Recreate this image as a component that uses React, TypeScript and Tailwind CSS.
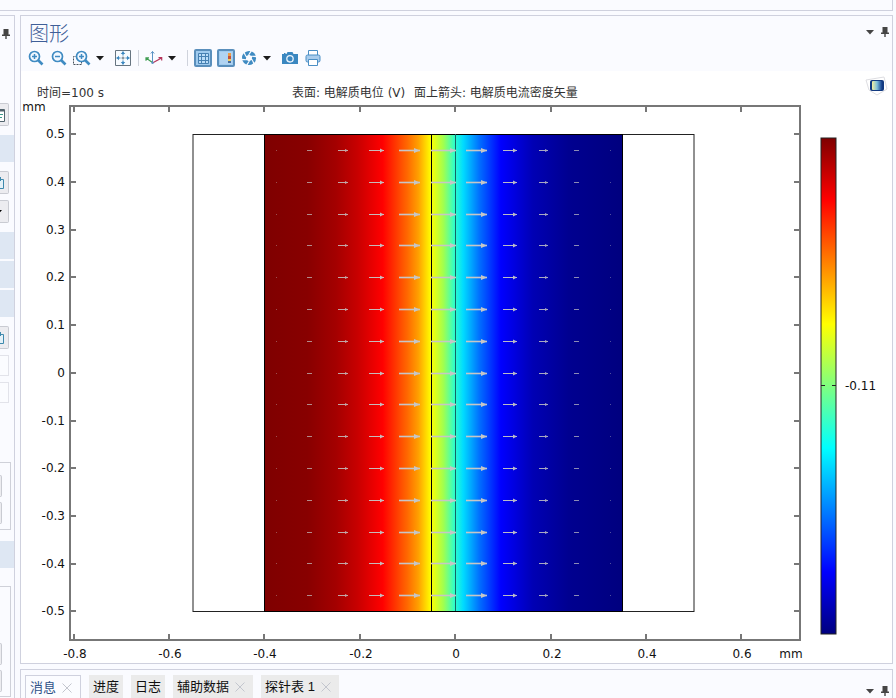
import type { ReactNode } from "react";

const xTicks = [-0.8, -0.6, -0.4, -0.2, 0, 0.2, 0.4, 0.6];
const yTicks = [0.5, 0.4, 0.3, 0.2, 0.1, 0, -0.1, -0.2, -0.3, -0.4, -0.5];

const toX = (v: number) => Math.round(455.2 + v * 477);
const toY = (v: number) => Math.round(372.8 - v * 477);

const surfaceStops = [
  [0, "#7f0000"],
  [0.12, "#880000"],
  [0.2, "#a40000"],
  [0.26, "#c80000"],
  [0.33, "#ff0000"],
  [0.4, "#ff6a00"],
  [0.43, "#ffa000"],
  [0.465, "#ffff00"],
  [0.5, "#a0ff50"],
  [0.53, "#30ffc8"],
  [0.555, "#00dcff"],
  [0.6, "#0070ff"],
  [0.66, "#0000ff"],
  [0.75, "#0000b4"],
  [0.85, "#000090"],
  [1, "#00007f"],
] as const;

const legendStops = [
  [0, "#7f0000"],
  [0.125, "#ff0000"],
  [0.375, "#ffff00"],
  [0.625, "#00ffff"],
  [0.875, "#0000ff"],
  [1, "#00007f"],
] as const;

// start x, length, stroke width and opacity of one arrow row
const arrows = [
  { x: 276, len: 1, w: 1, o: 0.4 },
  { x: 307, len: 5, w: 1, o: 0.7 },
  { x: 338, len: 10, w: 1, o: 0.85 },
  { x: 369, len: 15, w: 1, o: 0.95 },
  { x: 399, len: 21, w: 2, o: 1 },
  { x: 431, len: 25, w: 2, o: 1 },
  { x: 466, len: 21, w: 2, o: 1 },
  { x: 503, len: 14, w: 1, o: 0.95 },
  { x: 539, len: 9, w: 1, o: 0.85 },
  { x: 574, len: 5, w: 1, o: 0.7 },
  { x: 610, len: 1, w: 1, o: 0.4 },
];

function Caret() {
  return (
    <svg className="w-2 h-2" viewBox="0 0 8 8" fill="currentColor" aria-hidden="true">
      <path d="M0 2h8L4 6.500z" />
    </svg>
  );
}

function Pin() {
  return (
    <svg className="w-2 h-3" viewBox="0 0 8 12" fill="currentColor" aria-hidden="true">
      <path d="M1.500 1h5v5.500H8v1.500H4.700v3H3.300V8H0V6.500h1.500z" />
    </svg>
  );
}

function ToolButton({ label, active, children }: { label: string; active?: boolean; children: ReactNode }) {
  return (
    <button
      type="button"
      aria-label={label}
      className={
        active
          ? "w-[18px] h-[18px] flex items-center justify-center rounded-xs border-2 border-[#5a8fbc] bg-[#9fcbef]"
          : "w-[18px] h-[18px] flex items-center justify-center"
      }
    >
      {children}
    </button>
  );
}

function CaretButton({ label }: { label: string }) {
  return (
    <button type="button" aria-label={label} className="w-2 h-4 flex items-center justify-center text-[#1c1c1c]">
      <Caret />
    </button>
  );
}

function Magnifier({ sign, box }: { sign: "plus" | "minus"; box?: boolean }) {
  return (
    <svg className={box ? "w-[18px] h-4" : "w-4 h-4"} viewBox={box ? "-2 0 18 16" : "0 0 16 16"} fill="none" stroke="#3f8bc2" aria-hidden="true">
      {box && <path d="M2.500 6.500h-4v8h8v-3" stroke="#47525c" strokeDasharray="2 1" />}
      <circle cx="6.500" cy="6.500" r="5" strokeWidth="1.700" fill="#f2f8ff" />
      <path d="M10 10l4.500 4.500" strokeWidth="2.600" />
      <path d="M4 6.500h5" strokeWidth="1.500" />
      {sign === "plus" && <path d="M6.500 4v5" strokeWidth="1.500" />}
    </svg>
  );
}

function Toolbar() {
  return (
    <div role="toolbar" aria-label="图形工具" className="flex items-center h-5 pl-[6px]">
      <div className="flex items-center gap-[5px]">
        <ToolButton label="放大"><Magnifier sign="plus" /></ToolButton>
        <ToolButton label="缩小"><Magnifier sign="minus" /></ToolButton>
        <ToolButton label="框选缩放"><Magnifier sign="plus" box /></ToolButton>
        <CaretButton label="缩放选项" />
      </div>
      <div className="flex items-center ml-[10px] gap-[6px]">
        <ToolButton label="缩放到窗口大小">
          <svg className="w-4 h-4" viewBox="0 0 16 16" aria-hidden="true">
            <path d="M.5.5h15v15H.5z" fill="#f7fbff" stroke="#667480" />
            <path d="M8 1.500v4M8 10.500v4M1.500 8h4M10.500 8h4" stroke="#3a87c0" strokeWidth="1.200" />
            <path d="M8 1.500L10.300 4H5.700zM8 14.500l2.300-2.500H5.700zM1.500 8L4 5.700v4.600zM14.500 8L12 5.700v4.600z" fill="#3a87c0" />
            <path d="M8 6.500v3M6.500 8h3" stroke="#667480" />
          </svg>
        </ToolButton>
        <span className="w-px h-4 bg-[#cfd3dc]" />
        <ToolButton label="视图方向">
          <svg className="w-[18px] h-4" viewBox="0 0 18 16" fill="none" aria-hidden="true">
            <path d="M7.500 12V1.500M5.800 3.500l1.700-2 1.700 2" stroke="#5b93c4" />
            <path d="M7.500 12.500L1 8M1 10.700V7.800h3" stroke="#3f9d52" strokeWidth="1.200" />
            <path d="M7.500 13l9-5M13.500 7.700h3.200v2.800" stroke="#b5355b" strokeWidth="1.200" />
            <circle cx="7.500" cy="12.800" r="1.200" fill="#5b93c4" />
          </svg>
        </ToolButton>
      </div>
      <div className="flex items-center ml-[5px] gap-[11px]">
        <CaretButton label="视图选项" />
        <span className="w-px h-4 bg-[#cfd3dc]" />
      </div>
      <div className="flex items-center ml-[6px] gap-[5px]">
        <ToolButton label="显示栅格" active>
          <svg className="w-[11px] h-[11px] shrink-0" viewBox="0 0 11 11" fill="#b9dcf8" stroke="#4681b3" aria-hidden="true">
            <path d="M.5.5h10v10H.5zM3.500.5v10M7.500.5v10M.5 3.500h10M.5 7.500h10" />
          </svg>
        </ToolButton>
        <ToolButton label="显示图例" active>
          <svg className="w-[14px] h-[14px] shrink-0" viewBox="0 0 14 14" aria-hidden="true">
            <path d="M1 1h12v12H1z" fill="#b0d3f2" />
            <path d="M9 2h3v3H9z" fill="#ec9c45" />
            <path d="M9 5h3v3H9z" fill="#c4503a" />
            <path d="M9 8h3v2H9z" fill="#efce5c" />
            <path d="M9 10h3v2H9z" fill="#4a6b99" />
          </svg>
        </ToolButton>
        <ToolButton label="场景光">
          <svg className="w-4 h-4" viewBox="0 0 16 16" fill="#3f8bc2" aria-hidden="true">
            {[0, 60, 120, 180, 240, 300].map((angle) => (
              <path key={angle} d="M3.800 2.400A7 7 0 0 1 9.300 1L7 5.200 5.300 6z" transform={`rotate(${angle} 8 8)`} />
            ))}
          </svg>
        </ToolButton>
        <CaretButton label="场景光选项" />
      </div>
      <div className="flex items-center ml-[10px] gap-[5px]">
        <ToolButton label="图像快照">
          <svg className="w-4 h-4" viewBox="0 0 16 16" aria-hidden="true">
            <path d="M0 4h4.500l1-2h5l1 2H16v10H0z" fill="#3a87c0" />
            <circle cx="8" cy="8.800" r="3.200" fill="#3a87c0" stroke="#e8f2fb" strokeWidth="1.300" />
            <path d="M2 3.500h1.500" stroke="#3a87c0" />
          </svg>
        </ToolButton>
        <ToolButton label="打印">
          <svg className="w-4 h-4" viewBox="0 0 16 16" stroke="#4b8fc5" aria-hidden="true">
            <path d="M3.500.5h9v5h-9z" fill="#fff" />
            <rect x="1" y="5" width="14" height="7" rx="1.500" fill="#a8ccec" />
            <path d="M3.500 9.500h9v6h-9z" fill="#fff" />
          </svg>
        </ToolButton>
      </div>
    </div>
  );
}

function Arrow({ x, y, len, w, o }: { x: number; y: number; len: number; w: number; o: number }) {
  const head = w === 2 ? 6 : len > 12 ? 4 : 3;
  const half = w === 2 ? 2.5 : len > 12 ? 2 : 1.5;
  return (
    <g opacity={o}>
      <path d={`M${x} ${y}h${len}`} stroke="#c6c6c6" strokeWidth={w === 2 ? 1.6 : 1} />
      {len > 5 && (
        <path d={`M${x + len - head} ${y - half}l${head} ${half}l${-head} ${half}z`} fill="#c6c6c6" />
      )}
    </g>
  );
}

function Plot() {
  return (
    <svg
      className="block w-full bg-white font-['DejaVu_Sans','Noto_Sans_CJK_SC',sans-serif] text-[12px]"
      viewBox="21 71 871 592"
      role="img"
      aria-label="电解质电位 (V)"
    >
      <defs>
        <linearGradient id="surface">
          {surfaceStops.map(([o, c]) => (
            <stop key={o} offset={o} stopColor={c} />
          ))}
        </linearGradient>
        <linearGradient id="legend" x2="0" y2="1">
          {legendStops.map(([o, c]) => (
            <stop key={o} offset={o} stopColor={c} />
          ))}
        </linearGradient>
        <linearGradient id="logo">
          <stop offset="0" stopColor="#f4f0a0" />
          <stop offset="0.5" stopColor="#7fc0dc" />
          <stop offset="1" stopColor="#123c8c" />
        </linearGradient>
      </defs>

      {/* Titles */}
      <g fill="#333">
        <text x="37" y="97">时间=100 s</text>
        <text x="292" y="97">表面: 电解质电位 (V)</text>
        <text x="414" y="97">面上箭头: 电解质电流密度矢量</text>
      </g>

      {/* Logo */}
      <path d="M866 80l18-3 3 12-10 6-8-5z" fill="#fff" stroke="#dedee2" />
      <rect x="870" y="80" width="14" height="11" rx="2" fill="#123a80" />
      <rect x="872" y="81" width="10" height="9" rx="1" fill="url(#logo)" />

      {/* Frame and ticks */}
      <g stroke="#777" strokeWidth="2" fill="none">
        <path d="M70 106H800V640H70z" />
        {xTicks.map((v) => (
          <path key={v} d={`M${toX(v)} 106v6m0 522v6`} />
        ))}
        {yTicks.map((v) => (
          <path key={v} d={`M70 ${toY(v)}h6m718 0h6`} />
        ))}
      </g>
      <g fill="#111" textAnchor="middle">
        {xTicks.map((v) => (
          <text key={v} x={toX(v) + 1} y="658">{v}</text>
        ))}
        <text x="791" y="658">mm</text>
        <text x="34" y="111">mm</text>
      </g>
      <g fill="#111" textAnchor="end">
        {yTicks.map((v) => (
          <text key={v} x="65" y={toY(v) + 4}>{v}</text>
        ))}
      </g>

      {/* Geometry and surface */}
      <rect x="193" y="134.500" width="501" height="477" fill="#fff" stroke="#222" />
      <rect x="264.500" y="134.500" width="358" height="477" fill="url(#surface)" stroke="#000" />
      <path d="M431.500 134v477" stroke="#000" />
      <path d="M455.500 134v477" stroke="#146464" />

      {Array.from({ length: 15 }, (_, row) =>
        arrows.map((a) => <Arrow key={`${row}-${a.x}`} y={Math.round(150 + row * 31.8) + 0.5} {...a} />)
      )}

      {/* Color legend */}
      <rect x="821" y="138" width="15" height="496" fill="url(#legend)" stroke="#222" />
      <path d="M821 385.500h4m7 0h4" stroke="#222" />
      <text x="845" y="390" fill="#111">-0.11</text>
    </svg>
  );
}

function SideButton({ label, children }: { label: string; children?: ReactNode }) {
  return (
    <button
      type="button"
      aria-label={label}
      className="w-[9px] h-[23px] flex items-center rounded-r-xs border border-l-0 border-[#c9cbd2] bg-[#ececf0] overflow-hidden"
    >
      {children}
    </button>
  );
}

function PageIcon() {
  return (
    <svg className="w-[5px] h-4 shrink-0" viewBox="0 0 5 16" fill="#e4f1f8" stroke="#3f89ad" aria-hidden="true">
      <path d="M-2 4.500h5.500v9H-2M.5 2v4" />
    </svg>
  );
}

function SideGroup() {
  return (
    <div className="w-[11px] border border-l-0 border-[#cfd1d9] flex flex-col gap-[5px]">
      <div className="h-[7px]" />
      <div className="w-[2px] h-[22px] rounded-r border border-l-0 border-[#c9cbd2] bg-[#ececf0]" />
      <div className="w-[2px] h-[22px] rounded-r border border-l-0 border-[#c9cbd2] bg-[#ececf0]" />
      <div />
    </div>
  );
}

function SettingsPanel() {
  return (
    <aside className="w-[15px] shrink-0 border-t border-r border-[#cfd1de] flex flex-col overflow-hidden">
      <button type="button" aria-label="固定设置" className="mt-3 ml-[2px] text-[#454545] w-2"><Pin /></button>
      <div className="mt-[63px] flex flex-col">
        <SideButton label="属性">
          <svg className="w-[5px] h-4 shrink-0" viewBox="0 0 5 16" aria-hidden="true">
            <path d="M-3 2.500h7.500v12H-3" fill="#fff" stroke="#52646e" />
            <path d="M0 3.500h4" stroke="#52646e" strokeWidth="2" />
            <path d="M0 7.500h3M0 10.500h2" stroke="#3f9a8c" />
          </svg>
        </SideButton>
      </div>
      <div className="mt-[9px] h-[27px] bg-[#dee7f3]" />
      <div className="mt-[9px] flex flex-col gap-[6px]">
        <SideButton label="转到数据集"><PageIcon /></SideButton>
        <SideButton label="更多"><span className="-ml-[6px] shrink-0"><Caret /></span></SideButton>
      </div>
      <div className="mt-[9px] flex flex-col gap-[2px]">
        <div className="h-[27px] bg-[#dee7f3]" />
        <div className="h-[27px] bg-[#dee7f3]" />
        <div className="h-[27px] bg-[#dee7f3]" />
      </div>
      <div className="mt-[9px] flex flex-col gap-[6px]">
        <SideButton label="转到源"><PageIcon /></SideButton>
        <input aria-label="宽度" className="w-[9px] h-[21px] border border-l-0 border-[#e2e3ea] bg-[#fbfcff]" />
        <input aria-label="高度" className="w-[9px] h-[21px] border border-l-0 border-[#e2e3ea] bg-[#fbfcff]" />
      </div>
      <div className="mt-[59px]"><SideGroup /></div>
      <div className="mt-[11px] h-[27px] bg-[#dee7f3]" />
      <div className="mt-[18px] w-[11px] border border-l-0 border-[#cfd1d9] pt-14 pb-1 flex flex-col gap-[5px]">
        <div className="w-[2px] h-[22px] rounded-r border border-l-0 border-[#c9cbd2] bg-[#ececf0]" />
        <div className="w-[2px] h-[22px] rounded-r border border-l-0 border-[#c9cbd2] bg-[#ececf0]" />
      </div>
    </aside>
  );
}

function PanelControls() {
  return (
    <div className="flex items-center gap-[7px] pr-[3px] text-[#454545]">
      <button type="button" aria-label="面板菜单"><Caret /></button>
      <button type="button" aria-label="固定面板"><Pin /></button>
    </div>
  );
}

const tabs = [
  { name: "消息", closable: true, active: true },
  { name: "进度", closable: false, active: false },
  { name: "日志", closable: false, active: false },
  { name: "辅助数据", closable: true, active: false },
  { name: "探针表 1", closable: true, active: false },
];

function Tabs() {
  return (
    <div role="tablist" className="flex gap-2 pl-1">
      {tabs.map((t) => (
        <div
          key={t.name}
          className={
            t.active
              ? "flex items-center h-6 px-1 border border-b-0 border-[#cfd1de] bg-[#fbfcff] text-[#2f5288]"
              : "flex items-center h-6 px-1 bg-[#ebebeb] text-[#111]"
          }
        >
          <button type="button" role="tab" aria-selected={t.active} className="whitespace-nowrap">
            {t.name}
          </button>
          {t.closable && (
            <button type="button" aria-label={`关闭 ${t.name}`} className="w-5 flex justify-end pr-1 text-[#c3c6ce]">
              <svg className="w-[10px] h-[10px]" viewBox="0 0 10 10" stroke="currentColor" aria-hidden="true">
                <path d="M.5.5l9 9M9.500.5l-9 9" />
              </svg>
            </button>
          )}
        </div>
      ))}
    </div>
  );
}

export default function App() {
  return (
    <div className="h-screen flex flex-col overflow-hidden bg-[#fafbff] font-['Liberation_Sans','Noto_Sans_CJK_SC',sans-serif] text-[13px]">
      <header className="h-[11px] shrink-0 mr-[3px] border-b border-r border-[#cfd1de]" />
      <div className="flex flex-1 min-h-0 mt-1">
        <SettingsPanel />
        <main className="flex-1 min-w-0 flex flex-col gap-[5px] ml-[5px] mr-[3px]">
          <section className="border border-[#cfd1de] shrink-0">
            <div className="flex items-center justify-between h-8 pl-2">
              <h1 className="text-[20px] font-light leading-8 text-[#3f5f98] pt-1">图形</h1>
              <PanelControls />
            </div>
            <Toolbar />
            <div className="h-[3px]" />
            <Plot />
          </section>
          <section className="flex-1 border border-b-0 border-[#cfd1de] pt-[5px] flex items-start justify-between">
            <Tabs />
            <div className="pt-[10px]"><PanelControls /></div>
          </section>
        </main>
      </div>
    </div>
  );
}
